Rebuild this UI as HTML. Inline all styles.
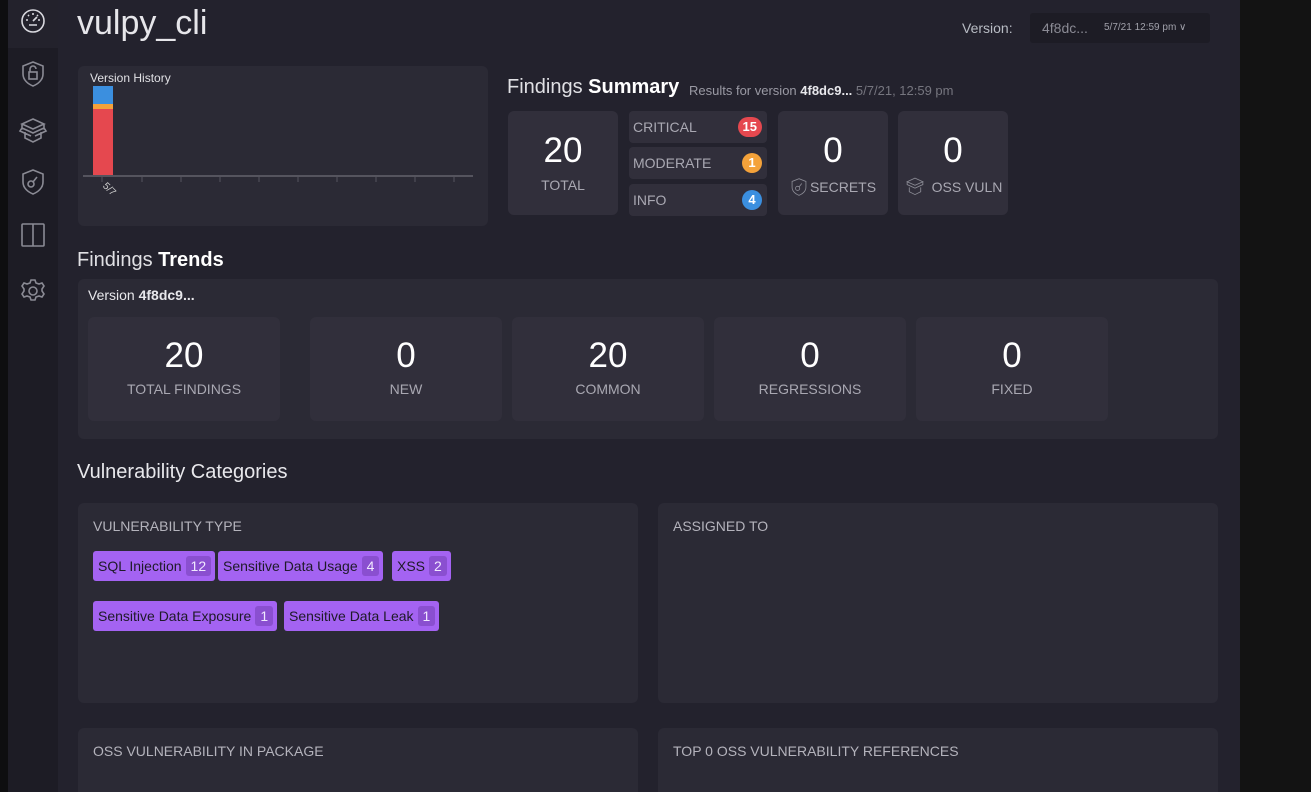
<!DOCTYPE html>
<html><head><meta charset="utf-8"><style>
*{box-sizing:border-box;margin:0;padding:0}
html,body{width:1311px;height:792px;overflow:hidden}
body{background:#131313;font-family:"Liberation Sans",sans-serif;color:#e8e8ec;position:relative}
.abs{position:absolute}
#strip{left:0;top:0;width:8px;height:792px;background:#0e0e10}
#side{left:8px;top:0;width:50px;height:792px;background:#1d1c25}
#sideact{left:8px;top:0;width:50px;height:48px;background:#23222c}
#main{left:58px;top:0;width:1182px;height:792px;background:#23222d}
.panel{background:#2b2a35;border-radius:6px}
.card{background:#312f3b;border-radius:6px;text-align:center}
.big{font-size:35px;color:#fff}
.lbl{font-size:14px;color:#a9a8b2}
.tag{position:absolute;height:30px;background:#a463f2;border-radius:3px;color:#1e1a28;font-size:14px;line-height:30px;padding-left:5px;white-space:nowrap}
.tag b{display:inline-block;background:#8a4fd0;color:#f0e8ff;font-weight:normal;border-radius:3px;padding:0 5px;line-height:20px;margin-left:4px;margin-right:4px}
.h2{font-size:20px;color:#e8e8ec}
.pill{position:absolute;border-radius:4px;background:#312f3b;width:138px;height:32px;font-size:14px;color:#a9a8b2;line-height:32px;padding-left:4px}
.badge{position:absolute;right:5px;top:6px;height:20px;border-radius:10px;color:#fff;font-weight:bold;font-size:13px;line-height:20px;text-align:center;min-width:20px;padding:0 5px}
svg.ic{position:absolute;fill:none;stroke:#8a8a94;stroke-width:1.6}
</style></head><body>
<div class="abs" id="strip"></div>
<div class="abs" id="side"></div>
<div class="abs" id="sideact"></div>
<div class="abs" id="main"></div>

<svg class="ic" style="left:20px;top:8px;stroke:#d8d8de" width="26" height="26" viewBox="0 0 26 26"><circle cx="13" cy="13" r="11"/><path d="M13 13l4-4M9 17h8M6 12h2M18 12h2M13 5v2M8 7l1 1M18 7l-1 1"/></svg>
<svg class="ic" style="left:20px;top:60px" width="26" height="28" viewBox="0 0 26 28"><path d="M13 2l10 4v8c0 6-5 10-10 12C8 24 3 20 3 14V6z"/><rect x="9" y="12" width="8" height="7"/><path d="M10 12V9a3 3 0 016 0"/></svg>
<svg class="ic" style="left:18px;top:116px" width="30" height="28" viewBox="0 0 30 28"><path d="M15 3l11 5-11 5-11-5zM4 8v4l11 5 11-5V8M4 12l-2 3 11 5M26 12l2 3-11 5M7 16v6l8 4 8-4v-6"/></svg>
<svg class="ic" style="left:20px;top:168px" width="26" height="28" viewBox="0 0 26 28"><path d="M13 2l10 4v8c0 6-5 10-10 12C8 24 3 20 3 14V6z"/><circle cx="11" cy="16" r="3"/><path d="M13 14l4-5"/></svg>
<svg class="ic" style="left:20px;top:222px" width="26" height="26" viewBox="0 0 26 26"><rect x="2" y="2" width="22" height="22" rx="1"/><path d="M13 2v22"/></svg>
<svg class="ic" style="left:20px;top:278px" width="26" height="26" viewBox="0 0 26 26"><circle cx="13" cy="13" r="4"/><path d="M11 2h4l1 3 3 1 3-1 2 3-2 3v2l2 3-2 3-3-1-3 1-1 3h-4l-1-3-3-1-3 1-2-3 2-3v-2L2 8l2-3 3 1 3-1z"/></svg>

<div class="abs" style="left:77px;top:4px;font-size:34px;color:#e6e6ea">vulpy_cli</div>
<div class="abs" style="left:962px;top:20px;font-size:14px;color:#b8bcc4">Version:</div>
<div class="abs" style="left:1030px;top:13px;width:180px;height:30px;background:#1d1c25;border-radius:3px"></div>
<div class="abs" style="left:1042px;top:20px;font-size:14px;color:#8a8a94">4f8dc...</div>
<div class="abs" style="left:1104px;top:22px;font-size:10px;color:#a0a0aa">5/7/21 12:59 pm ∨</div>

<div class="abs panel" style="left:78px;top:66px;width:410px;height:160px"></div>
<div class="abs" style="left:90px;top:71px;font-size:12px;color:#e0e0e4">Version History</div>
<div class="abs" style="left:93px;top:86px;width:20px;height:18px;background:#3b8fdf"></div>
<div class="abs" style="left:93px;top:104px;width:20px;height:5px;background:#f4a23a"></div>
<div class="abs" style="left:93px;top:109px;width:20px;height:67px;background:#e5484f"></div>
<div class="abs" style="left:83px;top:175px;width:390px;height:2px;background:#55545e"></div>
<div class="abs" style="left:102px;top:184px;font-size:10px;color:#ccc;transform:rotate(45deg)">5/7</div>
<svg class="abs" style="left:83px;top:176px" width="390" height="6"><g stroke="#55545e"><path d="M19 0v6M59 0v6M98 0v6M137 0v6M176 0v6M215 0v6M254 0v6M293 0v6M332 0v6M371 0v6"/></g></svg>

<div class="abs" style="left:507px;top:76px;font-size:20px;color:#e0e0e4">Findings <b style="color:#fff">Summary</b></div>
<div class="abs" style="left:689px;top:83px;font-size:13px;color:#9a9aa4">Results for version <b style="color:#e8e8ec">4f8dc9...</b> <span style="color:#76767f">5/7/21, 12:59 pm</span></div>

<div class="abs card" style="left:508px;top:111px;width:110px;height:104px"><div class="big" style="margin-top:20px">20</div><div class="lbl" style="margin-top:6px">TOTAL</div></div>
<div class="pill" style="left:629px;top:111px">CRITICAL<span class="badge" style="background:#e5484f">15</span></div>
<div class="pill" style="left:629px;top:147px">MODERATE<span class="badge" style="background:#f4a23a">1</span></div>
<div class="pill" style="left:629px;top:184px">INFO<span class="badge" style="background:#3b8fdf">4</span></div>
<div class="abs card" style="left:778px;top:111px;width:110px;height:104px"><div class="big" style="margin-top:20px">0</div><div class="lbl" style="margin-top:8px;padding-left:20px">SECRETS</div></div>
<svg class="ic" style="left:790px;top:176px;stroke-width:1.2" width="18" height="22" viewBox="0 0 26 28"><path d="M13 2l10 4v8c0 6-5 10-10 12C8 24 3 20 3 14V6z"/><circle cx="11" cy="16" r="3"/><path d="M13 14l4-5"/></svg>
<div class="abs card" style="left:898px;top:111px;width:110px;height:104px"><div class="big" style="margin-top:20px">0</div><div class="lbl" style="margin-top:8px;padding-left:28px">OSS VULN</div></div>
<svg class="ic" style="left:903px;top:176px;stroke-width:1.2" width="24" height="20" viewBox="0 0 30 28"><path d="M15 3l11 5-11 5-11-5zM4 8v4l11 5 11-5V8M7 16v6l8 4 8-4v-6"/></svg>

<div class="abs" style="left:77px;top:249px;font-size:20px;color:#e0e0e4">Findings <b style="color:#fff">Trends</b></div>
<div class="abs panel" style="left:78px;top:279px;width:1140px;height:160px"></div>
<div class="abs" style="left:88px;top:287px;font-size:14px;color:#e8e8ec">Version <b>4f8dc9...</b></div>
<div class="abs card" style="left:88px;top:317px;width:192px;height:104px"><div class="big" style="margin-top:19px">20</div><div class="lbl" style="margin-top:5px">TOTAL FINDINGS</div></div>
<div class="abs card" style="left:310px;top:317px;width:192px;height:104px"><div class="big" style="margin-top:19px">0</div><div class="lbl" style="margin-top:5px">NEW</div></div>
<div class="abs card" style="left:512px;top:317px;width:192px;height:104px"><div class="big" style="margin-top:19px">20</div><div class="lbl" style="margin-top:5px">COMMON</div></div>
<div class="abs card" style="left:714px;top:317px;width:192px;height:104px"><div class="big" style="margin-top:19px">0</div><div class="lbl" style="margin-top:5px">REGRESSIONS</div></div>
<div class="abs card" style="left:916px;top:317px;width:192px;height:104px"><div class="big" style="margin-top:19px">0</div><div class="lbl" style="margin-top:5px">FIXED</div></div>

<div class="abs h2" style="left:77px;top:461px">Vulnerability Categories</div>
<div class="abs panel" style="left:78px;top:503px;width:560px;height:200px"></div>
<div class="abs panel" style="left:658px;top:503px;width:560px;height:200px"></div>
<div class="abs lbl" style="left:93px;top:518px;color:#b4b3bc">VULNERABILITY TYPE</div>
<div class="abs lbl" style="left:673px;top:518px;color:#b4b3bc">ASSIGNED TO</div>
<div class="tag" style="left:93px;top:551px">SQL Injection<b>12</b></div>
<div class="tag" style="left:218px;top:551px">Sensitive Data Usage<b>4</b></div>
<div class="tag" style="left:392px;top:551px">XSS<b>2</b></div>
<div class="tag" style="left:93px;top:601px">Sensitive Data Exposure<b>1</b></div>
<div class="tag" style="left:284px;top:601px">Sensitive Data Leak<b>1</b></div>

<div class="abs panel" style="left:78px;top:728px;width:560px;height:64px;border-radius:6px 6px 0 0"></div>
<div class="abs panel" style="left:658px;top:728px;width:560px;height:64px;border-radius:6px 6px 0 0"></div>
<div class="abs lbl" style="left:93px;top:743px;color:#b4b3bc">OSS VULNERABILITY IN PACKAGE</div>
<div class="abs lbl" style="left:673px;top:743px;color:#b4b3bc">TOP 0 OSS VULNERABILITY REFERENCES</div>
</body></html>
